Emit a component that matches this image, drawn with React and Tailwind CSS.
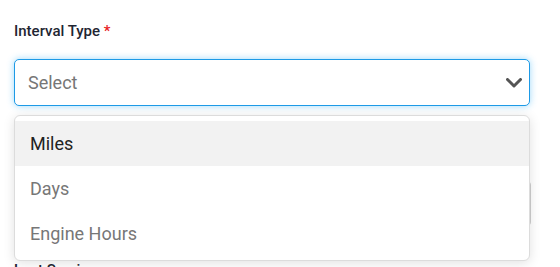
import React from 'react';

const options = ['Miles', 'Days', 'Engine Hours'];

const Chevron = () => (
  <svg width="16" height="10" viewBox="0 0 16 10" fill="none">
    <polyline points="1.5,1.5 8,8 14.5,1.5" stroke="#555" strokeWidth="3" strokeLinecap="round" strokeLinejoin="round" />
  </svg>
);

const App = () => {
  return (
    <div className="w-[560px] h-[267px] overflow-hidden bg-white pl-[14px] pr-[30px] pt-[21px] font-['Roboto',sans-serif]">
      <label className="block text-[15px] leading-[20px] font-medium text-[#1f2633]">
        Interval Type <span className="text-[#e8201c]">*</span>
      </label>

      <div className="relative mt-[18px]">
        <div className="flex h-[47px] items-center justify-between rounded-[5px] border border-[#1d9ae6] bg-white pl-[13px] pr-[7px] shadow-[0_0_7px_rgba(40,170,245,0.45)]">
          <span className="text-[18px] text-[#767676]">Select</span>
          <Chevron />
        </div>

        <div className="absolute left-0 right-0 top-[56px] z-10 rounded-[6px] border border-[#dcdcdc] bg-white pt-[5px] pb-[4px] shadow-[0_2px_12px_rgba(0,0,0,0.12)]">
          {options.map((o, i) => (
            <div
              key={o}
              className={
                i === 0
                  ? 'flex h-[45px] items-center bg-[#f2f2f2] px-[15px] text-[18px] text-[#222]'
                  : 'flex h-[45px] items-center px-[15px] text-[18px] text-[#777]'
              }
            >
              {o}
            </div>
          ))}
        </div>
      </div>

      <div className="mt-[37px]">
        <label className="block text-[15px] leading-[20px] font-medium text-[#1f2633]">Interval</label>
        <div className="mt-[17px] h-[47px] w-[517px] rounded-[5px] border border-[#cfcfcf] bg-white" />
      </div>

      <div className="mt-[33px]">
        <label className="block text-[15px] leading-[20px] font-medium text-[#1f2633]">Last Service</label>
      </div>
    </div>
  );
};

export default App;
